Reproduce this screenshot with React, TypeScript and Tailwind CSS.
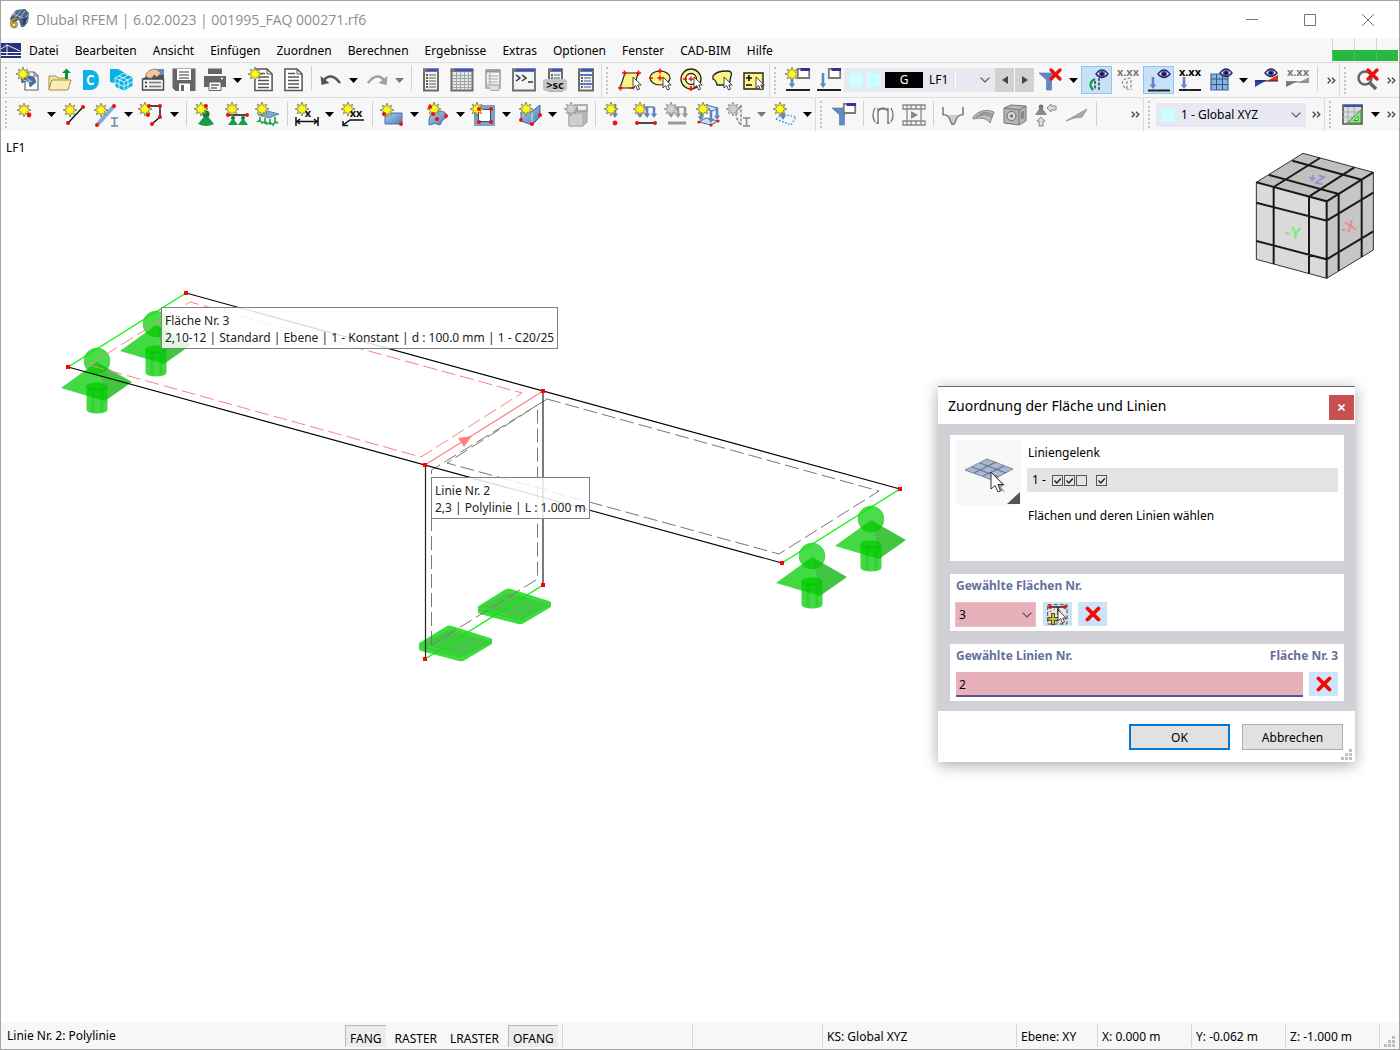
import { useState } from "react";
import type { ReactNode } from "react";

const MENU = ["Datei", "Bearbeiten", "Ansicht", "Einfügen", "Zuordnen", "Berechnen", "Ergebnisse", "Extras", "Optionen", "Fenster", "CAD-BIM", "Hilfe"];

const STAR = "M0 -7 L1.4 -3.2 L4.8 -4.8 L3.3 -1.4 L7 0 L3.3 1.4 L4.8 4.8 L1.4 3.2 L0 7 L-1.4 3.2 L-4.8 4.8 L-3.3 1.4 L-7 0 L-3.3 -1.4 L-4.8 -4.8 L-1.4 -3.2 Z";

function Icon({ children }: { children: ReactNode }) {
  return <svg className="w-6 h-6 shrink-0 overflow-visible" viewBox="0 0 24 24" fill="none">{children}</svg>;
}

function Star({ x = 7, y = 7, off = false }: { x?: number; y?: number; off?: boolean }) {
  return <path transform={`translate(${x} ${y})`} d={STAR} fill={off ? "#d0d0d0" : "#fff81c"} stroke={off ? "#8c8c8c" : "#77754a"} strokeWidth="0.8" />;
}

function Dots({ points, r = 2 }: { points: number[][]; r?: number }) {
  return <>{points.map(([x, y]) => <circle key={`${x}-${y}`} cx={x} cy={y} r={r} fill="#e8140c" />)}</>;
}

function Arrow({ x, y1, y2, off = false }: { x: number; y1: number; y2: number; off?: boolean }) {
  const c = off ? "#9a9a9a" : "#5f86c0";
  return (
    <>
      <path d={`M${x} ${y1}V${y2 - 3}`} stroke={c} strokeWidth="2.6" />
      <path d={`M${x - 3.2} ${y2 - 4.5}L${x} ${y2}L${x + 3.2} ${y2 - 4.5}Z`} fill={c} />
    </>
  );
}

function Eye({ x = 17, y = 5 }: { x?: number; y?: number }) {
  return (
    <g transform={`translate(${x} ${y})`}>
      <path d="M-6 0Q0 -8 6 0Q0 7 -6 0Z" fill="#e8e8fa" stroke="#26245e" strokeWidth="1.3" />
      <circle r="3" fill="#4a48a0" /><circle r="1.5" fill="#0e0c30" />
    </g>
  );
}

function MiniWindow({ x = 12, y = 0 }: { x?: number; y?: number }) {
  return (
    <g transform={`translate(${x} ${y})`}>
      <path d="M0.800 0.800H12.200V10H0.800Z" fill="#fff" stroke="#7a7a7a" strokeWidth="1.800" />
      <path d="M3.500 0H13V3H3.500Z" fill="#32329c" />
    </g>
  );
}

function Cursor({ x, y }: { x: number; y: number }) {
  return <path transform={`translate(${x} ${y})`} d="M0 0V11L2.600 8.600L4.600 13L6.600 12L4.800 8H8.200Z" fill="#fff" stroke="#333" strokeWidth="0.9" />;
}

function Cross({ className = "w-4 h-4" }: { className?: string }) {
  return <svg className={className} viewBox="0 0 16 16"><path d="M2.500 2.500L13.500 13.500M13.500 2.500L2.500 13.500" stroke="#f80505" strokeWidth="3.800" strokeLinecap="round" /></svg>;
}

function Funnel() {
  return <path d="M0 5H20L12.500 12V22H7.500V12Z" fill="#6289c4" stroke="#4a70aa" strokeWidth="0.600" />;
}

function Page({ x = 4 }: { x?: number }) {
  return (
    <g transform={`translate(${x} 0)`}>
      <path d="M0.900 1H13L18.100 6V22.500H0.900Z" fill="#fff" stroke="#555" strokeWidth="1.500" />
      <path d="M13 1V6H18" stroke="#555" fill="none" />
      <path d="M4 5.500H11M4 9H15M4 12.500H15M4 16H15M4 19.500H15" stroke="#555" strokeWidth="1.600" />
    </g>
  );
}

function ListWindow({ x, w, kind }: { x: number; w: number; kind?: "grid" | "blue" }) {
  return (
    <g transform={`translate(${x} 0)`}>
      <path d={`M1 1.500H${w - 1}V22.500H1Z`} fill={kind === "grid" ? "#e6e6e6" : "#f4f4f4"} stroke="#6c6c6c" strokeWidth="2" />
      <path d={`M0 0.500H${w}V4H0Z`} fill="#777" />
      <path d={`M4 0.800H${w - 1}V3H4Z`} fill="#3450d8" />
      {kind === "grid" ? (
        <path d="M2 7.500H22M2 10.500H22M2 13.500H22M2 16.500H22M2 19.500H22M6 4V22M10 4V22M14 4V22M18 4V22" stroke="#a4a4a4" strokeWidth="1" />
      ) : (
        <>
          <path d={`M6 7H${w - 3}M6 10H${w - 3}M6 13H${w - 3}M6 16H${w - 3}M6 19H${w - 3}`} stroke="#8a8a8a" strokeWidth="1.300" />
          <path d="M3 7H5M3 10H5M3 13H5M3 16H5M3 19H5" stroke="#333" strokeWidth="1.300" />
          {kind === "blue" && <path d={`M2 7H${w - 2}M2 16H${w - 2}`} stroke="#2e6de0" strokeWidth="1.500" />}
        </>
      )}
    </g>
  );
}

function Values({ off = false }: { off?: boolean }) {
  return <text x="12" y="8" textAnchor="middle" fontSize="11" fontWeight="700" fill={off ? "#7a7a7a" : "#000"}>x.xx</text>;
}

function Tool({ label, active = false, children }: { label: string; active?: boolean; children: ReactNode }) {
  return (
    <button aria-label={label} className={active
      ? "w-[31px] h-7 shrink-0 flex items-center justify-center bg-[#c6e1f8] border border-[#90c5f3]"
      : "w-[31px] h-7 shrink-0 flex items-center justify-center hover:bg-[#dcecf9]"}>
      <Icon>{children}</Icon>
    </button>
  );
}

function Caret({ label, off = false }: { label: string; off?: boolean }) {
  return (
    <button aria-label={`${label}: Optionen`} className="w-[15px] h-7 shrink-0 flex items-center justify-center">
      <svg className="w-[9px] h-[5px]" viewBox="0 0 9 5"><path d="M0 0H9L4.500 5Z" fill={off ? "#77777d" : "#000"} /></svg>
    </button>
  );
}

function Sep() {
  return <div className="w-2 h-7 shrink-0 flex justify-center"><div className="w-px h-[25px] bg-[#d2d2d2]" /></div>;
}

function Handle({ first = false }: { first?: boolean }) {
  return (
    <div className={first ? "w-3 self-stretch shrink-0 flex items-center pl-1" : "w-[13px] self-stretch shrink-0 flex items-center border-l border-[#dcdcdc] pl-1"}>
      <div className="h-[27px] border-l-2 border-dotted border-[#c4c4c4]" />
    </div>
  );
}

function More() {
  return (
    <button aria-label="Weitere" className="w-4 h-7 shrink-0 flex items-center justify-center">
      <svg className="w-[9px] h-[7px]" viewBox="0 0 9 7" fill="none"><path d="M0.700 0.700L3.500 3.500L0.700 6.300M5 0.700L7.800 3.500L5 6.300" stroke="#444" strokeWidth="1.300" /></svg>
    </button>
  );
}

function Chevron({ className = "" }: { className?: string }) {
  return <svg className={`w-[10px] h-[6px] pointer-events-none ${className}`} viewBox="0 0 10 6" fill="none"><path d="M0.600 0.600L5 5L9.400 0.600" stroke="#555" strokeWidth="1.200" /></svg>;
}

function TitleBar() {
  return (
    <header className="h-[37px] bg-white flex items-center pl-2">
      <svg className="w-[21px] h-[21px] mr-1.5 overflow-visible" viewBox="0 0 21 21">
        <path d="M2 7L7 1L16 0L20 4L19 13L15 18L12 18L10 11L5 13L1 11Z" fill="#4d6388" />
        <path d="M3 7L8 1.500M6 8.500L12 1.500M10 10L16 2M13 13L19.500 5M14 17L19.500 10M4 5L14 9L18 14" stroke="#a9bbd6" fill="none" />
        <path d="M13 10L18 8L17 14L14 17Z" fill="#31435f" />
        <text x="1" y="19" fontSize="14" fontWeight="700" fill="#d7b43c" stroke="#5c4a10" strokeWidth="0.500">6</text>
      </svg>
      <h1 className="text-[14px] text-[#8e8e8e] font-['Open_Sans','Noto_Sans',sans-serif]">Dlubal RFEM | 6.02.0023 | 001995_FAQ 000271.rf6</h1>
      <div className="ml-auto flex pr-0.5">
        <button aria-label="Minimieren" className="w-[58px] h-8 flex items-center justify-center"><svg className="w-3 h-3" viewBox="0 0 12 12"><path d="M0 5.500H12" stroke="#777" /></svg></button>
        <button aria-label="Maximieren" className="w-[58px] h-8 flex items-center justify-center"><svg className="w-3 h-3" viewBox="0 0 12 12" fill="none"><path d="M0.500 0.500H11.500V11.500H0.500Z" stroke="#777" /></svg></button>
        <button aria-label="Schließen" className="w-[58px] h-8 flex items-center justify-center"><svg className="w-3 h-3" viewBox="0 0 12 12"><path d="M0 0L12 12M12 0L0 12" stroke="#777" /></svg></button>
      </div>
    </header>
  );
}

function MenuBar() {
  return (
    <nav className="h-6 flex items-center">
      <svg className="w-5 h-[15px] shrink-0" viewBox="0 0 20 15" fill="none">
        <path d="M0 0H20V15H0Z" fill="#28327c" />
        <path d="M0 9.500H20M0 12.500H20" stroke="#fff" strokeWidth="1.200" /><path d="M6 1.500V12M0 6L6 2L19 8" stroke="#fff" strokeWidth="0.900" />
      </svg>
      <ul className="flex gap-4 pl-2 pt-0.5">
        {MENU.map(m => <li key={m}><button>{m}</button></li>)}
      </ul>
      <div className="ml-auto self-end w-[67px] h-6 pr-px flex items-end">
        {[0, 1, 2].map(i => (
          <div key={i} className="flex-1 h-full flex flex-col">
            <div className="flex-1 border-l border-[#d0d5dc]" />
            <div className="h-[11px] bg-[#27b93f] border-l border-[#3fc455] mb-px" />
          </div>
        ))}
      </div>
    </nav>
  );
}

function MainToolbar() {
  return (
    <div className="h-[35px] flex items-center border-t border-[#dedede]">
      <Handle first />
      <Tool label="Neu">
        <path d="M8 4H17L21 8V22H8Z" fill="#fff" stroke="#666" strokeWidth="1.200" /><path d="M17 4V8H21" stroke="#666" />
        <path d="M4 11Q10 6 17 9L19 14L13 19L12 14Q8 12 5 15Z" fill="#45719e" stroke="#2c4c70" strokeWidth="0.600" /><path d="M6 12L13 14M9 10L15 14" stroke="#b4cde6" /><Star x={6} y={6} />
      </Tool>
      <Tool label="Öffnen">
        <path d="M1 21V8H8L10 10H19V21Z" fill="#f2e3a0" stroke="#a29140" /><path d="M1 21L4 12H23L20 22H1Z" fill="#f9eebb" stroke="#a29140" /><path d="M17 11V5H14L18.500 0.500L23 5H20V11Z" fill="#0b9241" />
      </Tool>
      <Tool label="Dlubal Center">
        <path d="M4 2H12Q20 3 20 12T12 22H4Z" fill="#08b4e5" /><path d="M15 9Q12 6.500 9.800 9Q8 12 9.800 15Q12 17.500 15 15" stroke="#fff" strokeWidth="2" />
      </Tool>
      <Tool label="Blockmanager">
        <path d="M0 1H8L15 5L9 16L0 14Z" fill="#08b4e5" /><path d="M5 10L14 5L23 9V18L14 23L5 19Z" fill="#08b4e5" stroke="#f6f6f6" strokeWidth="0.800" /><path d="M5 10L14 14L23 9M14 14V23M9 8L18 12V21M18 7L9 12V21M5 14.500L14 18.500L23 13.500" stroke="#fff" strokeWidth="0.800" />
      </Tool>
      <Tool label="Modelldaten">
        <path d="M1 12L8 5H23V22H1Z" fill="#555" /><path d="M1.500 11H22.500V22H1.500Z" fill="#eee" stroke="#4a4a4a" strokeWidth="1.400" /><path d="M4 14.500H6M4 18.500H6" stroke="#222" strokeWidth="1.500" /><path d="M8 14.500H20M8 18.500H20" stroke="#777" strokeWidth="1.500" />
        <path d="M14 1H23V7H18Z" fill="#6a8ac4" /><path d="M5 6Q8 1 15 1L20 5L16 9L13 7L11 10L7 10L5 8Z" fill="#f0c4a0" stroke="#8a6048" strokeWidth="0.700" />
      </Tool>
      <Tool label="Speichern">
        <path d="M0.500 0.500H23.500V23H3.500L0.500 20Z" fill="#666" /><path d="M5 1H19V12H5Z" fill="#fff" /><path d="M7 4H17M7 7H17M7 10H17" stroke="#777" strokeWidth="1.400" /><path d="M7 15.500H18V23H7Z" fill="#fff" /><path d="M9 17H12V23H9Z" fill="#666" />
      </Tool>
      <Tool label="Drucken">
        <path d="M5 0.500H19V6H5Z" fill="#666" /><path d="M1 8H23V19H1Z" fill="#666" /><path d="M6 14H18V22.500H6Z" fill="#fff" stroke="#666" /><path d="M8 17H16M8 20H14" stroke="#666" strokeWidth="1.400" /><path d="M18 10.500H20" stroke="#fff" strokeWidth="1.500" />
      </Tool>
      <Caret label="Drucken" />
      <Tool label="Neues Ausdruckprotokoll"><Page x={5} /><Star x={6} y={6} /></Tool>
      <Tool label="Ausdruckprotokoll"><Page x={4} /></Tool>
      <Sep />
      <Tool label="Rückgängig"><path d="M4 13Q12 3 21 15" stroke="#555" strokeWidth="2.600" /><path d="M1.500 8L2.500 17L10.500 15Z" fill="#555" /></Tool>
      <Caret label="Rückgängig" />
      <Tool label="Wiederherstellen"><path d="M20 13Q12 3 3 15" stroke="#a0a0a0" strokeWidth="2.600" /><path d="M22.500 8L21.500 17L13.500 15Z" fill="#a0a0a0" /></Tool>
      <Caret label="Wiederherstellen" off />
      <Sep />
      <Tool label="Navigator"><ListWindow x={4} w={16} /></Tool>
      <Tool label="Tabellen"><ListWindow x={0.5} w={23} kind="grid" /></Tool>
      <Tool label="Tabelle einzeln"><path d="M5 2H19V20H5Z" fill="#f4f4f4" stroke="#a0a0a0" strokeWidth="1.600" /><path d="M5 3H19" stroke="#999" strokeWidth="3" /><path d="M7 8H17M7 11H17M7 14H17M7 17H17M9 5V20" stroke="#a8a8a8" /><path d="M6 17H18V22.500H10Z" fill="#ddd" stroke="#aaa" /></Tool>
      <Tool label="Konsole"><path d="M1 1.500H23V22.500H1Z" fill="#f4f4f4" stroke="#6c6c6c" strokeWidth="1.800" /><path d="M0 0.500H24V4H0Z" fill="#777" /><path d="M4 0.800H23V3H4Z" fill="#3450d8" /><path d="M4 7L8 10L4 13M10 7L14 10L10 13M16 14H21" stroke="#333" strokeWidth="1.500" /></Tool>
      <Tool label="Skriptmanager"><ListWindow x={5} w={15} /><rect x="0" y="11" width="24" height="12" rx="3" fill="#c4c4c4" /><text x="12" y="21" textAnchor="middle" fontSize="11" fontWeight="700" fill="#111">&gt;sc</text></Tool>
      <Tool label="Liste"><ListWindow x={4} w={16} kind="blue" /></Tool>
      <Handle />
      <Tool label="Auswahl Parallelogramm"><path d="M7 5H20L16 20H2Z" fill="#fbf384" stroke="#222" strokeWidth="1.200" /><path d="M4 5H9M6.500 2.500V7.500M18 5H23M20.500 2.500V7.500M0 20H5M2.500 17.500V22.500M11 20H16" stroke="#ee1111" strokeWidth="1.600" /><Cursor x={15} y={9} /></Tool>
      <Tool label="Auswahl Ellipse"><ellipse cx="11" cy="10" rx="10" ry="7" fill="#fbf384" stroke="#222" strokeWidth="1.200" /><path d="M8.500 10H13.500M11 7.500V12.500M11 0.500V5.500M8.500 3H13.500M0 10H4" stroke="#ee1111" strokeWidth="1.500" /><Cursor x={14} y={9} /></Tool>
      <Tool label="Auswahl Ring"><circle cx="11" cy="11" r="10" fill="#fbf384" stroke="#222" strokeWidth="1.300" /><circle cx="11" cy="11" r="5.500" fill="#fff" stroke="#222" strokeWidth="1.300" /><path d="M8.500 11H13.500M11 8.500V13.500M3 11H7M11 18V23M8.500 20.500H13.500" stroke="#ee1111" strokeWidth="1.500" /><Cursor x={14} y={9} /></Tool>
      <Tool label="Auswahl Freihand"><path d="M2 8Q5 3 16 3Q22 3 20 8L18 17L6 17Q5 12 2 11Z" fill="#fbf384" stroke="#222" strokeWidth="1.300" /><Cursor x={13} y={9} /></Tool>
      <Tool label="Auswahl ändern"><path d="M2 5H21V21H2Z" fill="#fbf384" stroke="#222" strokeWidth="1.400" /><path d="M4 10H10M7 7V13M4 17H10" stroke="#111" strokeWidth="1.600" /><Cursor x={14} y={9} /></Tool>
      <Handle />
      <Tool label="Neuer Lastfall"><path d="M0 22H24" stroke="#222" strokeWidth="2" /><Arrow x={6} y1={8} y2={20} /><Star x={6} y={6} /><MiniWindow x={11} /></Tool>
      <Tool label="Lastfälle"><path d="M0 22H24" stroke="#222" strokeWidth="2" /><Arrow x={6} y1={5} y2={20} /><MiniWindow x={11} /></Tool>
      <div className="w-[151px] h-6 shrink-0 bg-[#e8e8f3] flex items-center pl-[5px] relative">
        <span className="w-[14px] h-[14px] bg-[#ccffff] mr-1" /><span className="w-[14px] h-[14px] bg-[#ccffff] mr-1" />
        <span className="w-[38px] h-4 bg-black text-white text-center leading-4">G</span>
        <select aria-label="Lastfall" className="appearance-none bg-transparent flex-1 h-full pl-1.5 outline-none"><option>LF1</option></select>
        <span className="absolute right-[39px] top-[3px] w-px h-[18px] bg-white" />
        <Chevron className="absolute right-[5px] top-[9px]" />
      </div>
      <button aria-label="Vorheriger" className="w-[19px] h-6 mr-px shrink-0 bg-[#d2d2d2] flex items-center justify-center"><svg className="w-[6px] h-2" viewBox="0 0 6 8"><path d="M6 0V8L0 4Z" fill="#444" /></svg></button>
      <button aria-label="Nächster" className="w-[19px] h-6 mr-px shrink-0 bg-[#d2d2d2] flex items-center justify-center"><svg className="w-[6px] h-2" viewBox="0 0 6 8"><path d="M0 0V8L6 4Z" fill="#444" /></svg></button>
      <Tool label="Filter löschen"><Funnel /><path d="M12 2L21 11M21 2L12 11" stroke="#ec1010" strokeWidth="3.400" strokeLinecap="round" /></Tool>
      <Caret label="Filter löschen" />
      <Tool label="Ergebnisse anzeigen" active><path d="M10 11Q2 15 8 22" stroke="#0a9a3c" strokeWidth="2" /><path d="M14 10V22M10 13V22" stroke="#222" strokeWidth="1.300" strokeDasharray="3 1.500" /><Eye x={17} y={6} /></Tool>
      <Tool label="Ergebniswerte"><Values off /><path d="M15 10Q4 11 7 16Q9 22 13 21M15 12V22M11 13V20" stroke="#888" strokeWidth="1.200" strokeDasharray="3 1.500" /></Tool>
      <Tool label="Lasten anzeigen" active><path d="M1 22.500H23" stroke="#222" strokeWidth="2" /><Arrow x={6} y1={9} y2={21} /><Eye x={17} y={6} /></Tool>
      <Tool label="Lastwerte"><path d="M1 22H23" stroke="#222" strokeWidth="2" /><Arrow x={6} y1={9} y2={21} /><Values /></Tool>
      <Tool label="Ergebnisraster"><path d="M2 6H19V22H2Z" fill="#88b4de" stroke="#38689c" strokeWidth="1.200" /><path d="M2 11H19M2 16.500H19M7.500 6V22M13.500 6V22" stroke="#315780" /><Eye x={17} y={5} /></Tool>
      <Caret label="Ergebnisraster" />
      <Tool label="Diagramm"><path d="M0 12H12L0 19Z" fill="#2848b8" /><path d="M12 13L23 7V13Z" fill="#d8341c" /><path d="M0 13H23" stroke="#222" /><Eye x={16} y={5} /></Tool>
      <Tool label="Diagrammwerte"><path d="M0 13H12L0 19Z" fill="#777" /><path d="M12 15L23 9V15Z" fill="#999" /><path d="M0 14H23" stroke="#888" /><Values off /></Tool>
      <Sep />
      <div className="flex-1" />
      <More />
      <Handle />
      <Tool label="Suche löschen"><circle cx="9" cy="10" r="6.500" stroke="#666" strokeWidth="2.500" /><path d="M14 15L20 21" stroke="#666" strokeWidth="3.500" /><path d="M12 2L21 11M21 2L12 11" stroke="#ee1010" strokeWidth="3.400" strokeLinecap="round" /></Tool>
      <More />
    </div>
  );
}

function EditToolbar() {
  return (
    <div className="h-[34px] flex items-center border-t border-[#dedede]">
      <Handle first />
      <Tool label="Knoten"><Star x={7} y={7} /><Dots points={[[12, 12]]} r={2.4} /></Tool>
      <Caret label="Knoten" />
      <Tool label="Linie"><path d="M5 20L20 4" stroke="#111" strokeWidth="1.400" /><Star /><Dots points={[[5, 20], [20, 4]]} /></Tool>
      <Tool label="Stab"><path d="M4 21L20 3" stroke="#86a8dc" strokeWidth="4" /><path d="M17 15H24M17 23H24M20.500 15V23" stroke="#6f87b4" strokeWidth="1.600" /><Star /><Dots points={[[3, 22], [20, 3]]} /></Tool>
      <Caret label="Stab" />
      <Tool label="Polylinie"><path d="M8 11V3H20V14L12 21" stroke="#111" strokeWidth="1.400" /><Star x={5} y={6} /><Dots points={[[8, 12], [9, 3], [20, 3], [20, 14], [12, 21]]} /></Tool>
      <Caret label="Polylinie" />
      <Sep />
      <Tool label="Knotenlager"><path d="M12 11L20 21Q12 25 4 21Z" fill="#179a4a" /><circle cx="12" cy="11" r="3.600" fill="#107838" /><Star x={7} y={6} /><Dots points={[[12, 3]]} /></Tool>
      <Tool label="Linienlager"><path d="M3 12H22" stroke="#111" strokeWidth="1.500" /><circle cx="8" cy="15" r="2" fill="#107838" /><circle cx="18" cy="15" r="2" fill="#107838" /><path d="M8 15L13 22H3ZM18 15L23 22H13Z" fill="#179a4a" /><Star x={7} y={6} /><Dots points={[[3, 12], [22, 12]]} /></Tool>
      <Tool label="Flächenlager"><path d="M2 12L12 8L23 11L13 15Z" fill="#7fa6cf" stroke="#476c92" strokeWidth="0.700" /><path d="M4 14V19M9 15V21M14 16V22M19 14V20M1 19Q4 16 6 20Q10 17 11 21Q14 18 17 22Q19 18 22 20" stroke="#16a04a" strokeWidth="1.600" /><Star x={6} y={6} /></Tool>
      <Sep />
      <Tool label="Bemaßung x"><path d="M1 14V23M23 14V23M2 18.500H22M5 16L2 18.500L5 21M19 16L22 18.500L19 21" stroke="#111" strokeWidth="1.500" /><Star x={7} y={6} /><text x="13" y="14" textAnchor="middle" fontSize="11" fontWeight="700" fill="#111">x</text></Tool>
      <Caret label="Bemaßung" />
      <Tool label="Bemaßung xx"><path d="M23 17H9L2 22M2 18V22.500H7" stroke="#111" strokeWidth="1.500" /><Star x={7} y={6} /><text x="15" y="14" textAnchor="middle" fontSize="11" fontWeight="700" fill="#111">xx</text></Tool>
      <Sep />
      <Tool label="Fläche"><path d="M5 10H22V21H5Z" fill="url(#blue)" stroke="#4c7098" /><Star /><Dots points={[[4, 11], [21, 21]]} /></Tool>
      <Caret label="Fläche" />
      <Tool label="Schale"><path d="M3 20Q2 9 13 8Q21 8 21 14Q16 16 14 22Q9 19 3 22Z" fill="url(#blue)" stroke="#4c7098" /><Star x={8} y={6} /><Dots points={[[4, 4], [7, 11], [20, 13], [11, 16]]} /></Tool>
      <Caret label="Schale" />
      <Tool label="Öffnung"><path d="M4 4H21V21H4Z" fill="#fff" stroke="#7d9fc8" strokeWidth="4" /><path d="M6.500 6.500H18.500V18.500H6.500Z" fill="#fff" stroke="#35506e" /><Star x={5} y={6} /><Dots points={[[7, 6], [19, 6], [7, 19], [19, 19]]} /></Tool>
      <Caret label="Öffnung" />
      <Tool label="Volumen"><path d="M3 9L13 9L22 2V14L14 22L3 18Z" fill="url(#blue)" stroke="#3e648c" /><path d="M14 10V22" stroke="#dce8f6" /><Star x={8} y={6} /><Dots points={[[3, 17], [14, 21], [22, 12]]} /></Tool>
      <Caret label="Volumen" />
      <Tool label="Körper"><path d="M5 8L9 6H23V19L19 23H5Z" fill="#b8b8b8" stroke="#999" /><path d="M5 10H19V23H5Z" fill="#cfcfcf" stroke="#aaa" /><path d="M13 2H23V8H13Z" fill="#eee" stroke="#999" strokeWidth="1.500" /><Star x={7} y={6} off /></Tool>
      <Sep />
      <Tool label="Knotenlast"><Arrow x={12} y1={1} y2={15} /><Star x={8} y={6} /><Dots points={[[12, 20]]} r={2.4} /></Tool>
      <Tool label="Linienlast"><path d="M6 4H20" stroke="#5f86c0" strokeWidth="1.500" /><Arrow x={13} y1={4} y2={15} /><Arrow x={20} y1={4} y2={15} /><Arrow x={6} y1={4} y2={15} /><path d="M3 20H21" stroke="#111" strokeWidth="1.500" /><Star x={6} y={6} /><Dots points={[[3, 20], [21, 20]]} /></Tool>
      <Tool label="Stablast"><path d="M6 4H20" stroke="#999" strokeWidth="1.500" /><Arrow x={13} y1={4} y2={15} off /><Arrow x={20} y1={4} y2={15} off /><Arrow x={6} y1={4} y2={15} off /><path d="M3 20H21" stroke="#999" strokeWidth="3" /><Star x={6} y={6} off /></Tool>
      <Tool label="Flächenlast"><path d="M4 5L10 2L22 5L17 8ZM3 19L10 15L22 18L15 22Z" fill="#d0dff0" stroke="#4068a0" /><Arrow x={5} y1={5} y2={18} /><Arrow x={15} y1={7} y2={20} /><Arrow x={21} y1={5} y2={17} /><Star x={7} y={6} /><Dots points={[[3, 19], [15, 22], [22, 18]]} r={1.6} /></Tool>
      <Tool label="Freie Last"><path d="M14 3Q4 10 14 22M14 2V22" stroke="#888" strokeWidth="1.500" strokeDasharray="3 1.500" /><path d="M16 15H23M16 23H23M19.500 15V23" stroke="#888" strokeWidth="1.500" /><Star x={6} y={6} off /></Tool>
      <Caret label="Freie Last" off />
      <Tool label="Freie Flächenlast"><path d="M3 16L9 11L23 14L18 22Z" stroke="#1c9ae0" strokeWidth="1.400" strokeDasharray="1.500 1.800" /><Arrow x={10} y1={2} y2={17} /><Star x={7} y={6} /></Tool>
      <Caret label="Freie Flächenlast" />
      <Handle />
      <Tool label="Filter"><Funnel /><MiniWindow x={11} /></Tool>
      <Sep />
      <Tool label="Rahmen"><path d="M7 20V6H17V20M5 20H8M16 20H19M7 8Q12 2 17 8M4 5Q0 12 4 19M20 5Q24 12 20 19" stroke="#777" strokeWidth="1.400" /></Tool>
      <Tool label="Animation"><path d="M1 2H23V6H1ZM1 18H23V22H1Z" stroke="#888" strokeWidth="1.300" /><path d="M5 2V22M19 2V22M9 2V6M14 2V6M9 18V22M14 18V22" stroke="#888" strokeWidth="1.300" /><path d="M9 8V16L16 12Z" fill="#888" /></Tool>
      <Sep />
      <Tool label="Verlauf"><path d="M2 4V12M22 4V12" stroke="#777" strokeWidth="1.500" /><path d="M2 12Q7 11 9 17Q12 26 15 17Q17 11 22 12" fill="#ccc" stroke="#777" strokeWidth="1.400" /></Tool>
      <Tool label="Flächenergebnis"><path d="M1 14Q10 4 22 9L18 20Q14 13 1 16Z" fill="#bbb" stroke="#888" /><path d="M4 14Q13 9 20 14M8 11Q14 8 21 12" stroke="#777" /></Tool>
      <Tool label="Volumenergebnis"><path d="M1 5L8 2L23 3V18L16 22L1 20Z" fill="#b4b4b4" stroke="#777" /><path d="M1 5L16 7L23 3M16 7V22" stroke="#777" /><circle cx="8.500" cy="13" r="4.500" stroke="#666" fill="#ddd" /><circle cx="8.500" cy="13" r="1.800" fill="#777" /><ellipse cx="19.500" cy="12" rx="1.800" ry="4" fill="#888" /></Tool>
      <Tool label="Auflagerkräfte"><path d="M7 3L13 12H1Z" fill="#888" /><circle cx="7" cy="4" r="2.400" fill="#777" /><path d="M22 3V7H17V9L13 5L17 1V3Z" fill="#ddd" stroke="#888" /><path d="M5 23V18H3L7 14L11 18H9V23Z" fill="#ddd" stroke="#888" /></Tool>
      <Tool label="Schnitt"><path d="M1 18L22 6L17 14L9 15Z" fill="#aaa" stroke="#999" /></Tool>
      <Sep />
      <div className="flex-1" />
      <More />
      <Handle />
      <div className="w-[150px] h-6 shrink-0 bg-[#e8e8f3] flex items-center pl-[5px] relative mr-0.5">
        <span className="w-[14px] h-[14px] bg-[#ccffff]" />
        <select aria-label="Koordinatensystem" className="appearance-none bg-transparent flex-1 h-full pl-1.5 outline-none"><option>1 - Global XYZ</option></select>
        <Chevron className="absolute right-[5px] top-[9px]" />
      </div>
      <More />
      <Handle />
      <Tool label="Arbeitsebene"><path d="M2 2H21V21H2Z" fill="#ddd" stroke="#555" strokeWidth="1.600" /><path d="M3 2H22V4H3Z" fill="#3450c8" /><path d="M2 9H21M2 14H21M7 4V21M13 4V21" stroke="#aaa" /><path d="M6 20L20 7V20Z" fill="#8fe08a" stroke="#2a9a2e" /><path d="M13 17.500L17 13.500V17.500Z" fill="#fff" stroke="#2a9a2e" /></Tool>
      <Caret label="Arbeitsebene" />
      <More />
    </div>
  );
}

function Support({ x, y }: { x: number; y: number }) {
  return (
    <g transform={`translate(${x} ${y})`} fill="#00cc00">
      <path d="M-36 27L0 1L8 40Z" fillOpacity="0.740" /><path d="M0 1L35 21L8 40Z" fill="#06b406" fillOpacity="0.760" />
      <circle r="13" fillOpacity="0.700" /><circle r="13" fill="none" stroke="#0cba0c" strokeOpacity="0.350" />
      <path d="M-10.500 25A10.500 3.500 0 0 1 10.500 25V49A10.500 3.500 0 0 1 -10.500 49Z" fillOpacity="0.740" />
      <path d="M-4 28V51M5 28V51" stroke="#0aa80a" strokeOpacity="0.200" strokeWidth="3" />
      <path d="M-10.500 25A10.500 3.500 0 0 0 10.500 25" fill="none" stroke="#0aae0a" strokeOpacity="0.500" />
    </g>
  );
}

function Pad({ x, y }: { x: number; y: number }) {
  return (
    <g transform={`translate(${x} ${y})`}>
      <path d="M-37 1Q-38 -1 -35 -2L-9 -18Q-7 -19 -4 -18L34 -6Q37 -5 36 -3V0L9 16Q6 18 3 17L-35 7Q-37 6 -37 5Z" fill="#3ddc3d" />
      <path d="M-35 0L-7 -14L34 -3L6 12Z" fill="#41ca41" /><path d="M-36 2L4 13L36 -3" fill="none" stroke="#35c635" />
    </g>
  );
}

function Model() {
  const nodes = [[186, 293], [68, 367], [543, 391], [425, 465], [900, 489], [782, 563], [543, 585], [425, 659]];
  return (
    <svg className="absolute inset-0 w-full h-full" fill="none" role="img" aria-label="Modell">
      <defs>
        <linearGradient id="blue" x1="0" y1="0" x2="1" y2="1"><stop offset="0" stopColor="#b4d2f2" /><stop offset="1" stopColor="#4c78b4" /></linearGradient>
      </defs>
      <g transform="translate(-1 -131)">
        <Support x={156} y={324} /><Support x={97} y={361} /><Support x={871} y={519} /><Support x={812} y={556} />
        <Pad x={515} y={607} /><Pad x={456} y={644} />
        <g stroke="#777" strokeDasharray="14 5">
          <path d="M547 399L879 491L779 554L447 463Z" />
          <path d="M431.500 645V470L537.500 405V579Z" />
        </g>
        <path d="M89 365L190 302L522 393L421 457Z" stroke="#ff8080" strokeDasharray="14 5" />
        <path d="M186 293L900 489M68 367L782 563" stroke="#000" strokeWidth="1.100" />
        <path d="M543 391V585M425.500 465V659" stroke="#222" strokeWidth="1.200" />
        <path d="M186 293L68 367M900 489L782 563M543 585L425 659" stroke="#00f000" strokeWidth="1.200" />
        <path d="M425 465L543 391" stroke="#ff8080" strokeWidth="1.200" />
        <path d="M472 436L458 438L464 447Z" fill="#ff8080" />
        {nodes.map(([x, y]) => <rect key={`${x}-${y}`} x={x - 2} y={y - 2} width="4" height="4" fill="#f00" />)}
      </g>
    </svg>
  );
}

function ViewCube() {
  return (
    <svg className="absolute right-[21px] top-[19px] w-[125px] h-[132px]" viewBox="70 60 375 396" fill="none" role="img" aria-label="Ansichtswürfel">
      <path d="M80 157L220 70L431 127L291 214Z" fill="#c0c0c0" />
      <path d="M80 157L291 214V445L80 388Z" fill="#dadada" />
      <path d="M291 214L431 127V360L291 445Z" fill="#c6c6c6" />
      <path d="M80 157L220 70L431 127V360L291 445L80 388Z" stroke="#333" strokeWidth="3" />
      <path d="M80 157L291 214L431 127M291 214V445M132 171V402M238 200V431M80 218L291 272L431 188M80 333L291 388L431 304M327 192V423M396 149V381M132 171L271 84M238 200L374 112M118 135L327 192M188 92L396 149" stroke="#191919" strokeWidth="6" />
      <g fontFamily="Liberation Sans" fontWeight="700" textAnchor="middle">
        <text transform="translate(188 325) rotate(6)" fontSize="50" fill="#7fe87f">-Y</text>
        <text transform="translate(361 306) rotate(-20)" fontSize="46" fill="#ee8a8a">-X</text>
        <text transform="translate(256 160) rotate(14)" fontSize="40" fontStyle="italic" fill="#8d8dd6">+Z</text>
      </g>
    </svg>
  );
}

function Hint({ className, title, text }: { className: string; title: string; text: string }) {
  return (
    <div className={`absolute border border-[#808080] bg-white/85 px-[3px] pt-1 pb-0.5 leading-[17px] whitespace-nowrap text-[#222] ${className}`}>
      <div>{title}</div>
      <div>{text}</div>
    </div>
  );
}

function HingeBox({ label, checked }: { label: string; checked: boolean }) {
  return (
    <span className="relative w-[11px] h-[11px] mr-px">
      <input type="checkbox" aria-label={label} checked={checked} readOnly className="block appearance-none w-[11px] h-[11px] border border-[#555]" />
      {checked && <svg className="absolute inset-0 w-[11px] h-[11px] pointer-events-none" viewBox="0 0 11 11" fill="none"><path d="M2.500 5.500L4.800 8L8.800 3.500" stroke="#222" strokeWidth="1.400" /></svg>}
    </span>
  );
}

function Grip({ className = "" }: { className?: string }) {
  return <svg className={`w-[11px] h-[11px] ${className}`} viewBox="0 0 11 11"><path d="M8 0H11V3H8ZM4 4H7V7H4ZM8 4H11V7H8ZM0 8H3V11H0ZM4 8H7V11H4ZM8 8H11V11H8Z" fill="#c0c0c0" /></svg>;
}

function AssignDialog() {
  const [surface, setSurface] = useState("3");
  const [lines, setLines] = useState("2");

  return (
    <section role="dialog" aria-label="Zuordnung der Fläche und Linien" className="absolute right-[44px] top-[255px] w-[417px] bg-white border-t border-[#6a6a6a] shadow-[0_3px_14px_rgba(0,0,0,0.35)]">
      <div className="h-[37px] flex items-center justify-between pl-2.5 pr-px">
        <h2 className="text-[14px]">Zuordnung der Fläche und Linien</h2>
        <button aria-label="Schließen" className="w-[25px] h-[25px] mt-1 bg-[#c75050] flex items-center justify-center">
          <svg className="w-[7px] h-[7px]" viewBox="0 0 7 7"><path d="M0.500 0.500L6.500 6.500M6.500 0.500L0.500 6.500" stroke="#fff" strokeWidth="1.600" /></svg>
        </button>
      </div>

      <div className="bg-[#d1d0d6] pl-3 pr-[11px] pt-[11px] pb-2.5 flex flex-col gap-[13px]">
        <div className="bg-white h-[126px] flex pl-1.5 pr-1.5 pt-[5px] gap-1.5">
          <button aria-label="Auswahlmodus" className="relative w-[65px] h-[65px] bg-[#f8f8f8] shrink-0">
            <svg className="w-[65px] h-[65px]" viewBox="0 0 65 65">
              <path d="M9 30L31 19L57 29L36 40Z" fill="#a9b8d3" stroke="#7c899f" />
              <path d="M16 27L43 37M24 23L50 33M18 33L40 22M27 36L48 26" stroke="#68748a" strokeWidth="1.200" />
              <path d="M38 35L49 45L45 47L49 52L43 50Z" fill="#555" opacity="0.600" />
              <path d="M35 32V49L39 45.500L42 52L44.500 51L42 44.500H47Z" fill="#fff" stroke="#333" />
              <path d="M64 52V64H51Z" fill="#555" />
            </svg>
          </button>
          <div className="flex-1">
            <div className="h-7 leading-[26px] pl-px">Liniengelenk</div>
            <div className="h-6 bg-[#e4e4e4] flex items-center pl-[5px]">
              <span className="mr-1.5">1 -</span>
              <HingeBox label="ux" checked /><HingeBox label="uy" checked /><HingeBox label="uz" checked={false} />
              <span className="w-2" />
              <HingeBox label="phi x" checked />
            </div>
            <div className="mt-[14px] leading-5 pl-px">Flächen und deren Linien wählen</div>
          </div>
        </div>

        <div className="bg-white h-[57px] px-[5px] pt-0.5">
          <label htmlFor="surface" className="block h-[26px] leading-5 pl-px font-bold text-[#65719a]">Gewählte Flächen Nr.</label>
          <div className="flex">
            <div className="relative w-[81px] h-[25px] mr-[7px]">
              <select id="surface" value={surface} onChange={e => setSurface(e.target.value)} className="appearance-none w-full h-full bg-[#e8b0bb] border border-[#f6bcc4] pl-[3px] outline-none"><option>3</option></select>
              <Chevron className="absolute right-1 top-[10px]" />
            </div>
            <button aria-label="Flächen grafisch auswählen" className="w-[29px] h-6 mr-1.5 bg-[#cce4f7] flex items-center justify-center">
              <svg className="w-[21px] h-[21px]" viewBox="0 0 21 21" fill="none">
                <path d="M0.700 0.700H20V20H0.700Z" fill="#e6e6e6" stroke="#444" strokeDasharray="4 2" />
                <path d="M4 16L16 20M12 5L20 18M2 8L8 5" stroke="#777" strokeDasharray="3 2" />
                <path d="M4 3H18M11 3V11" stroke="#222" strokeWidth="1.500" /><Dots points={[[3, 3], [18, 3]]} />
                <path d="M6 9V21M0.500 15H12" stroke="#55501a" strokeWidth="4" /><path d="M6 10V20M1.500 15H11" stroke="#c8bc40" strokeWidth="2" />
                <Cursor x={11} y={6} />
              </svg>
            </button>
            <button aria-label="Flächen löschen" className="w-[29px] h-6 bg-[#cce4f7] flex items-center justify-center"><Cross /></button>
          </div>
        </div>

        <div className="bg-white h-[57px] px-1.5 pt-0.5">
          <div className="h-[26px] leading-5 flex justify-between font-bold text-[#65719a]">
            <label htmlFor="lines">Gewählte Linien Nr.</label>
            <span>Fläche Nr. 3</span>
          </div>
          <div className="flex gap-1.5">
            <input id="lines" value={lines} onChange={e => setLines(e.target.value)} className="flex-1 min-w-0 h-[25px] bg-[#e8b0bb] border-b-2 border-[#5b519c] pl-[3px] pt-0.5 outline-none" />
            <button aria-label="Linien löschen" className="w-[29px] h-6 bg-[#cce4f7] flex items-center justify-center"><Cross /></button>
          </div>
        </div>
      </div>

      <div className="h-[51px] flex justify-end gap-3 pt-[13px] pr-3">
        <button className="w-[101px] h-[26px] pt-0.5 bg-[#e1e1e1] border-2 border-[#0078d7]">OK</button>
        <button className="w-[101px] h-[26px] pt-0.5 bg-[#e1e1e1] border border-[#adadad]">Abbrechen</button>
      </div>
      <Grip className="absolute right-[3px] bottom-[2px]" />
    </section>
  );
}

function Snap({ label, on = false }: { label: string; on?: boolean }) {
  return (
    <button aria-pressed={on} className={on
      ? "h-[22px] px-1 bg-[#ececec] border-l border-t border-[#b8b8b8]"
      : "h-[22px] px-1 border-t border-transparent"}>
      {label}
    </button>
  );
}

function StatusBar() {
  return (
    <footer className="h-[27px] bg-[#f7f7f7] flex items-stretch pt-0.5 pb-0.5 leading-[26px]">
      <div className="w-[344px] pl-1.5 leading-6">Linie Nr. 2: Polylinie</div>
      <div className="flex items-center gap-[5px] pr-1 border-r border-[#d6d6d6]">
        <Snap label="FANG" on /><Snap label="RASTER" /><Snap label="LRASTER" /><Snap label="OFANG" on />
      </div>
      <div className="flex-1 border-r border-[#d6d6d6]" />
      <div className="flex-1 border-r border-[#d6d6d6]" />
      <div className="w-[194px] pl-1 border-r border-[#d6d6d6]">KS: Global XYZ</div>
      <div className="w-[81px] pl-1 border-r border-[#d6d6d6]">Ebene: XY</div>
      <div className="w-[94px] pl-1 border-r border-[#d6d6d6]">X: 0.000 m</div>
      <div className="w-[94px] pl-1 border-r border-[#d6d6d6]">Y: -0.062 m</div>
      <div className="w-[94px] pl-1 border-r border-[#d6d6d6]">Z: -1.000 m</div>
      <div className="w-[19px] flex items-end justify-end pr-1"><Grip /></div>
    </footer>
  );
}

export default function App() {
  return (
    <div className="min-h-screen flex flex-col border border-[#a5a5a5] bg-[#f7f7f7] text-[12px] text-black overflow-hidden font-['Noto_Sans',sans-serif]">
      <TitleBar />
      <MenuBar />
      <MainToolbar />
      <EditToolbar />
      <main className="relative flex-1 bg-white overflow-hidden">
        <Model />
        <div className="absolute left-[5px] top-2">LF1</div>
        <ViewCube />
        <Hint className="left-[160px] top-[176px]" title="Fläche Nr. 3" text="2,10-12 | Standard | Ebene | 1 - Konstant | d : 100.0 mm | 1 - C20/25" />
        <Hint className="left-[430px] top-[346px]" title="Linie Nr. 2" text="2,3 | Polylinie | L : 1.000 m" />
        <AssignDialog />
      </main>
      <StatusBar />
    </div>
  );
}
